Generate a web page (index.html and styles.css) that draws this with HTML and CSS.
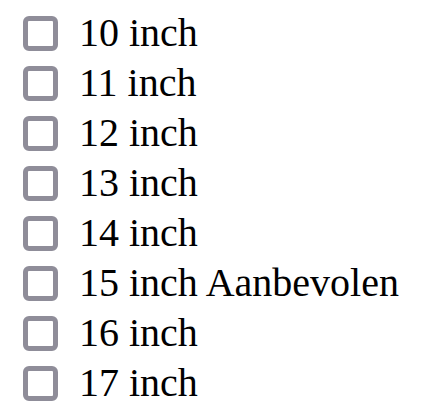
FILE: index.html
```html
<!DOCTYPE html>
<html>
<head>
<meta charset="utf-8">
<link rel="stylesheet" href="styles.css">
</head>
<body>
<ul class="list">
  <li class="item"><span class="box"></span><span class="label">10 inch</span></li>
  <li class="item"><span class="box"></span><span class="label">11 inch</span></li>
  <li class="item"><span class="box"></span><span class="label">12 inch</span></li>
  <li class="item"><span class="box"></span><span class="label">13 inch</span></li>
  <li class="item"><span class="box"></span><span class="label">14 inch</span></li>
  <li class="item"><span class="box"></span><span class="label">15 inch Aanbevolen</span></li>
  <li class="item"><span class="box"></span><span class="label">16 inch</span></li>
  <li class="item"><span class="box"></span><span class="label">17 inch</span></li>
</ul>
</body>
</html>
```
FILE: styles.css
```css
html, body { background: #fff; }
body {
  margin: 8px;
  font-family: "Liberation Serif", "Times New Roman", serif;
  color: #000;
}
.list {
  list-style: none;
  margin: 0;
  padding: 0 0 0 15px;
}
.item {
  display: flex;
  align-items: center;
  height: 50px;
  gap: 21px;
}
.box {
  box-sizing: border-box;
  width: 35px;
  height: 35px;
  border: 5px solid #8f8d99;
  border-radius: 6px;
  background: #fff;
  flex: none;
}
.label {
  font-size: 40px;
  line-height: 50px;
}
```
